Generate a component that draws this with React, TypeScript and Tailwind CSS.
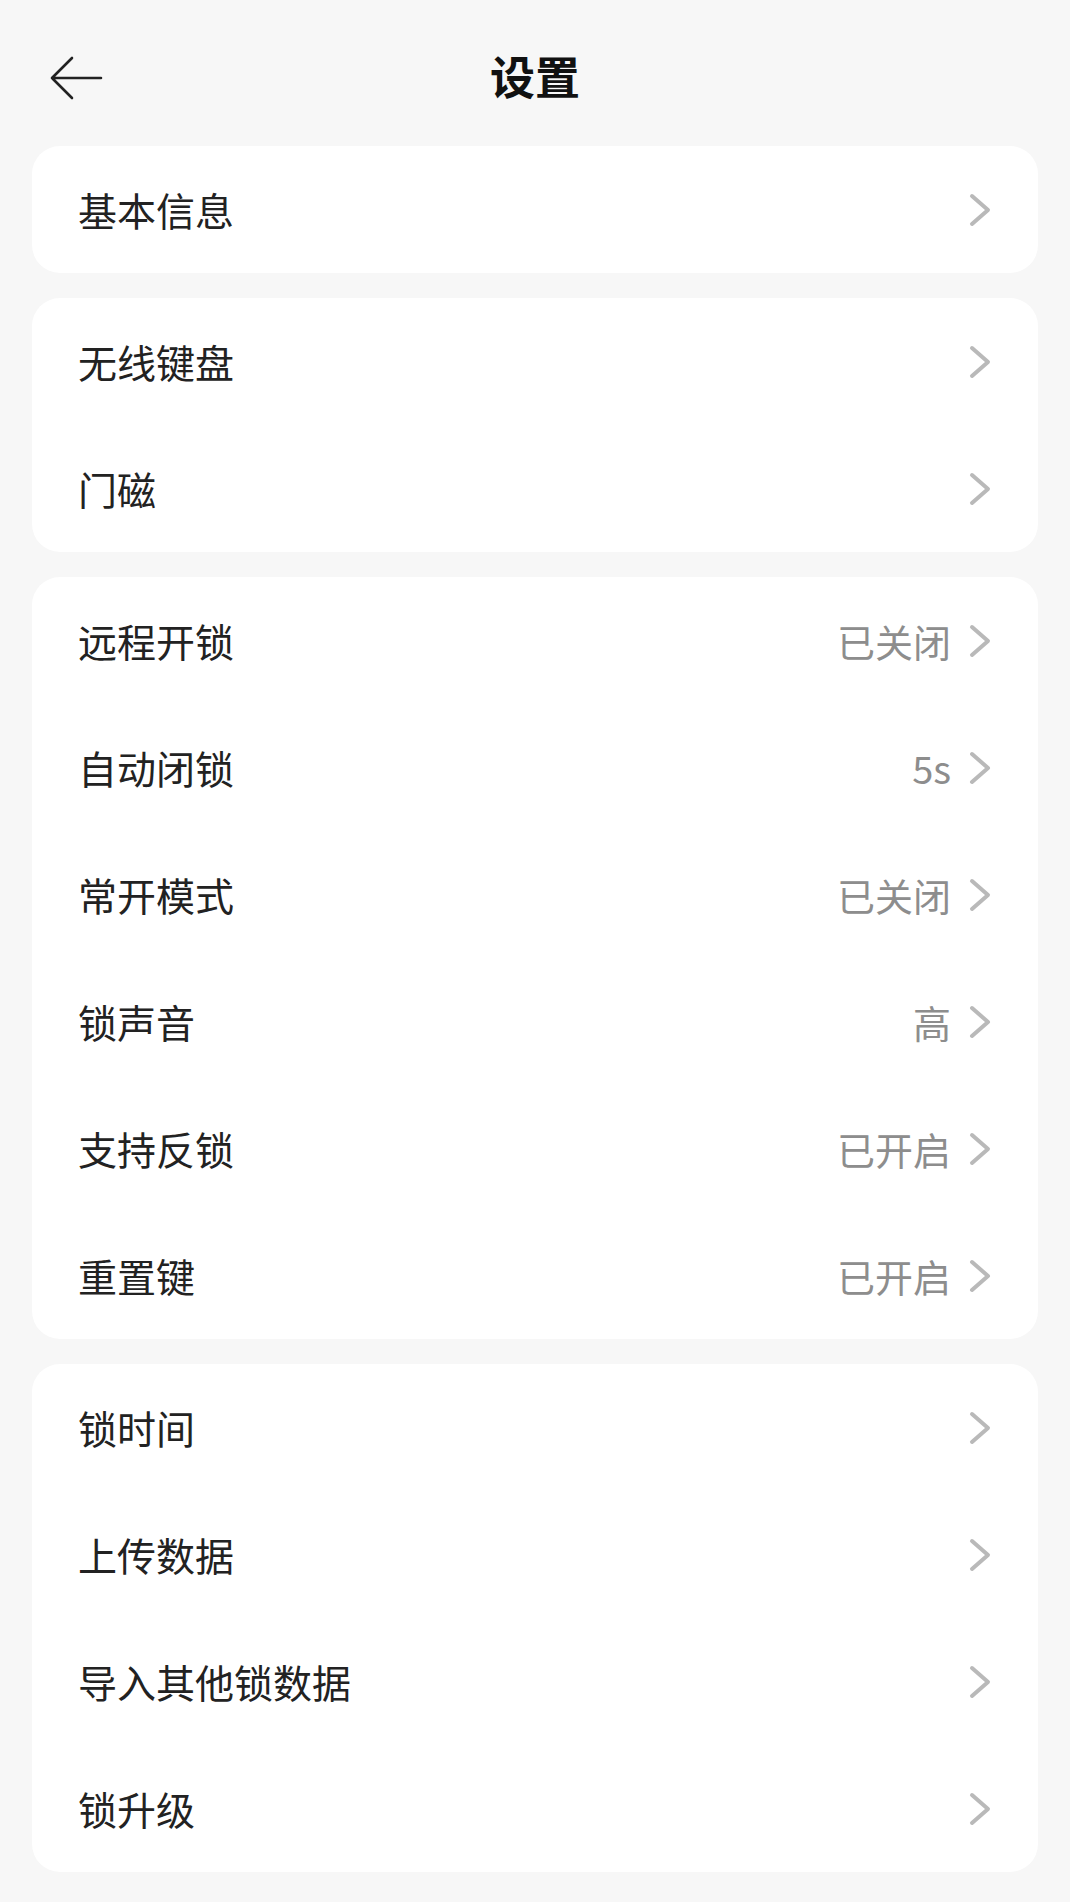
import { ReactNode } from "react";

type Row = { label: string; value?: string };

const groups: Row[][] = [
  [{ label: "基本信息" }],
  [{ label: "无线键盘" }, { label: "门磁" }],
  [
    { label: "远程开锁", value: "已关闭" },
    { label: "自动闭锁", value: "5s" },
    { label: "常开模式", value: "已关闭" },
    { label: "锁声音", value: "高" },
    { label: "支持反锁", value: "已开启" },
    { label: "重置键", value: "已开启" },
  ],
  [{ label: "锁时间" }, { label: "上传数据" }, { label: "导入其他锁数据" }, { label: "锁升级" }],
];

const Chevron = () => (
  <svg width="23" height="34" viewBox="0 0 23 34" fill="none">
    <polyline points="4,3 20,17 4,31" stroke="#b9b9b9" strokeWidth="4" strokeLinecap="round" strokeLinejoin="round" />
  </svg>
);

const Card = ({ children }: { children: ReactNode }) => (
  <div className="bg-white rounded-[28px] overflow-hidden">{children}</div>
);

export default function App() {
  return (
    <div
      className="min-h-[1902px] w-[1070px] bg-[#f7f7f7] px-[32px] pt-[35px] pb-[30px]"
      style={{ fontFamily: '"Noto Sans CJK SC", "Noto Sans", sans-serif' }}
    >
      {/* Header */}
      <div className="grid grid-cols-[1fr_auto_1fr] items-center h-[80px] mb-[31px]">
        <div className="flex items-center pl-[17px] pt-[6px]">
          <svg width="54" height="44" viewBox="0 0 54 44" fill="none">
            <path d="M52 22H3M23 2L3 22L23 42" stroke="#222" strokeWidth="2.6" strokeLinecap="round" strokeLinejoin="round" />
          </svg>
        </div>
        <h1 className="text-[45px] font-bold text-[#111] leading-none">设置</h1>
        <div />
      </div>

      <div className="flex flex-col gap-[25px]">
        {groups.map((rows, gi) => (
          <Card key={gi}>
            {rows.map((r) => (
              <div key={r.label} className="flex items-center justify-between h-[127px] pl-[46px] pr-[47px]">
                <span className="text-[39px] text-[#222] leading-none">{r.label}</span>
                <div className="flex items-center gap-[17px]">
                  {r.value && <span className="text-[38px] text-[#8d8d8d] leading-none">{r.value}</span>}
                  <Chevron />
                </div>
              </div>
            ))}
          </Card>
        ))}
      </div>
    </div>
  );
}
